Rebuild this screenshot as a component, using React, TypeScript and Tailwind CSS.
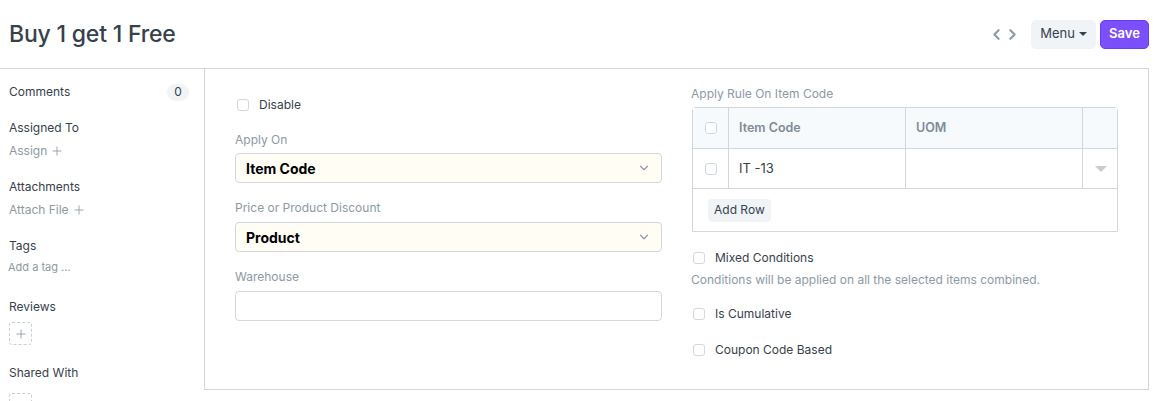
import { ChevronLeft, ChevronRight, Plus, ChevronDown } from "lucide-react";

function Check({ label }: { label: string }) {
  return (
    <div className="flex items-center h-[20px] pt-[1px]">
      <span className="w-[12px] h-[12px] ml-[2px] rounded-[3px] border border-[#d1d8dd] bg-white" />
      <span className="ml-[10px] text-[12px] text-[#36414c]">{label}</span>
    </div>
  );
}

function Label({ children }: { children: string }) {
  return <div className="h-[18px] leading-[18px] text-[12px] text-[#8d99a6]">{children}</div>;
}

function Select({ value }: { value: string }) {
  return (
    <div className="h-[30px] flex items-center justify-between px-[10px] rounded-[4px] border border-[#d1d8dd] bg-[#fffdf4]">
      <span className="text-[14px] font-bold text-black">{value}</span>
      <ChevronDown size={14} strokeWidth={2} className="text-[#8d99a6]" />
    </div>
  );
}

function SideBlock({ title, action }: { title: string; action?: string }) {
  return (
    <div>
      <div className="h-[18px] leading-[18px] text-[12px] text-[#36414c]">{title}</div>
      {action && (
        <div className="mt-[5px] h-[18px] flex items-center text-[12px] text-[#8d99a6]">
          {action}
          <Plus size={14} strokeWidth={1.5} className="ml-[3px]" />
        </div>
      )}
    </div>
  );
}

export default function App() {
  return (
    <div className="w-[1164px] h-[401px] overflow-hidden bg-white font-['Inter',sans-serif]">
      <div className="w-[1164px] h-[68px] flex items-center justify-between pl-[9px] pr-[15px]">
        <h1 className="text-[23px] font-medium text-[#36414c] tracking-[-0.2px]">Buy 1 get 1 Free</h1>
        <div className="flex items-center">
          <ChevronLeft size={17} strokeWidth={3} className="text-[#8d99a6]" />
          <ChevronRight size={17} strokeWidth={3} className="text-[#8d99a6] ml-[-1px]" />
          <button className="ml-[10px] w-[65px] h-[29px] rounded-[5px] bg-[#f0f4f7] flex items-center justify-center text-[13px] text-[#36414c]">
            Menu
            <span className="ml-[4px] w-0 h-0 border-l-[4px] border-r-[4px] border-t-[4px] border-l-transparent border-r-transparent border-t-[#36414c]" />
          </button>
          <button className="ml-[4px] w-[49px] h-[29px] rounded-[5px] bg-[#7b4ffc] border border-[#6a3df0] text-white text-[13px] font-semibold">
            Save
          </button>
        </div>
      </div>

      <div className="flex w-[1149px] border-t border-[#d1d8dd]">
        <aside className="w-[204px] shrink-0 pl-[9px] pr-[15px] pt-[14px]">
          <div className="flex items-center justify-between h-[18px]">
            <span className="text-[12px] text-[#36414c]">Comments</span>
            <span className="w-[22px] h-[17px] rounded-full bg-[#f0f4f7] text-[12px] text-[#36414c] flex items-center justify-center">0</span>
          </div>
          <div className="mt-[18px]">
            <SideBlock title="Assigned To" action="Assign" />
          </div>
          <div className="mt-[18px]">
            <SideBlock title="Attachments" action="Attach File" />
          </div>
          <div className="mt-[18px]">
            <div className="h-[18px] leading-[18px] text-[12px] text-[#36414c]">Tags</div>
            <div className="mt-[3px] h-[18px] leading-[18px] text-[11px] text-[#8d99a6] ml-[-1px]">Add a tag ...</div>
          </div>
          <div className="mt-[22px]">
            <div className="h-[18px] leading-[18px] text-[12px] text-[#36414c]">Reviews</div>
            <div className="mt-[6px] w-[23px] h-[23px] rounded-[3px] border border-dashed border-[#c8cfd5] flex items-center justify-center text-[#8d99a6]">
              <Plus size={14} strokeWidth={1.5} />
            </div>
          </div>
          <div className="mt-[19px]">
            <div className="h-[18px] leading-[18px] text-[12px] text-[#36414c]">Shared With</div>
            <div className="mt-[11px] w-[23px] h-[23px] rounded-[3px] border border-dashed border-[#c8cfd5]" />
          </div>
        </aside>

        <main className="w-[945px] h-[321px] border-l border-r border-b border-[#d1d8dd] px-[30px] grid grid-cols-2 gap-[29px]">
          <div className="pt-[25px]">
            <Check label="Disable" />
            <div className="mt-[17px]">
              <Label>Apply On</Label>
              <div className="mt-[4px]">
                <Select value="Item Code" />
              </div>
            </div>
            <div className="mt-[16px]">
              <Label>Price or Product Discount</Label>
              <div className="mt-[5px]">
                <Select value="Product" />
              </div>
            </div>
            <div className="mt-[16px]">
              <Label>Warehouse</Label>
              <div className="mt-[5px] h-[30px] rounded-[4px] border border-[#d1d8dd] bg-white" />
            </div>
          </div>

          <div className="pt-[16px]">
            <Label>Apply Rule On Item Code</Label>
            <div className="mt-[4px] ml-[1px] w-[426px] border border-[#d1d8dd] rounded-t-[4px]">
              <div className="grid grid-cols-[35px_177px_177px_1fr] h-[40px] bg-[#f7fafc] text-[12.5px] font-semibold text-[#7f8b97]">
                <div className="flex items-center justify-center">
                  <span className="w-[12px] h-[12px] rounded-[3px] border border-[#d1d8dd] bg-white" />
                </div>
                <div className="border-l border-[#d1d8dd] flex items-center pl-[10px]">Item Code</div>
                <div className="border-l border-[#d1d8dd] flex items-center pl-[10px]">UOM</div>
                <div className="border-l border-[#d1d8dd]" />
              </div>
              <div className="grid grid-cols-[35px_177px_177px_1fr] h-[40px] border-t border-[#d1d8dd] text-[13px] text-[#36414c]">
                <div className="flex items-center justify-center">
                  <span className="w-[12px] h-[12px] rounded-[3px] border border-[#d1d8dd] bg-white" />
                </div>
                <div className="border-l border-[#d1d8dd] flex items-center pl-[10px]">IT -13</div>
                <div className="border-l border-[#d1d8dd]" />
                <div className="border-l border-[#d1d8dd] flex items-center justify-center">
                  <span className="ml-[1px] w-0 h-0 border-l-[6px] border-r-[6px] border-t-[6px] border-l-transparent border-r-transparent border-t-[#c8cdd2]" />
                </div>
              </div>
              <div className="h-[43px] border-t border-[#d1d8dd] flex items-center pl-[15px]">
                <button className="h-[23px] px-[6px] rounded-[4px] bg-[#f0f4f7] text-[12px] text-[#36414c]">Add Row</button>
              </div>
            </div>
            <div className="mt-[15px]">
              <Check label="Mixed Conditions" />
              <div className="mt-[4px] h-[18px] leading-[18px] text-[12px] text-[#8d99a6]">
                Conditions will be applied on all the selected items combined.
              </div>
            </div>
            <div className="mt-[14px]">
              <Check label="Is Cumulative" />
            </div>
            <div className="mt-[16px]">
              <Check label="Coupon Code Based" />
            </div>
          </div>
        </main>
      </div>
    </div>
  );
}
